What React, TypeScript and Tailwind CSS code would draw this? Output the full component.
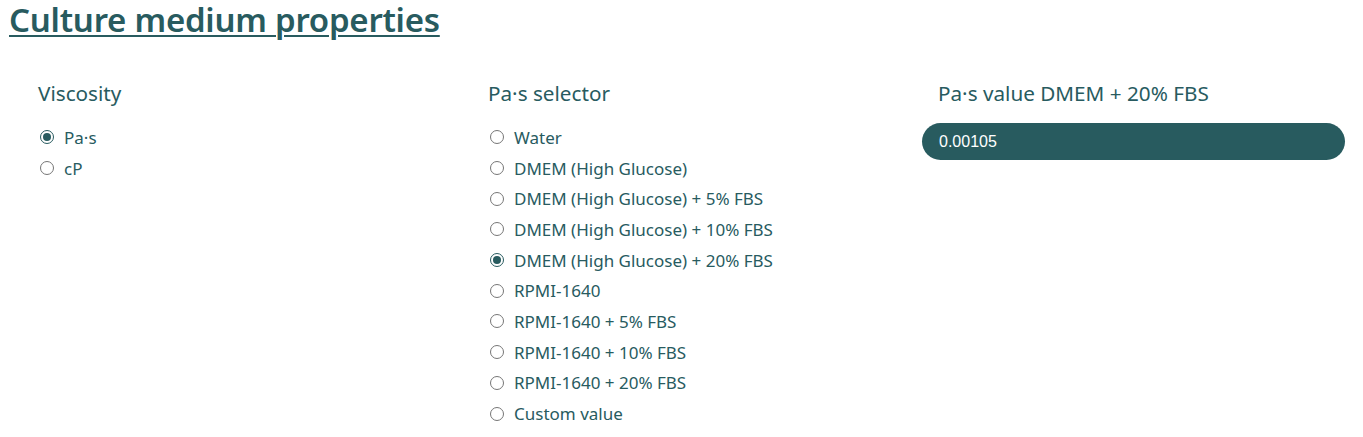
import React, { useState } from "react";

function Radio({ name, label, checked, onChange }: { name: string; label: string; checked: boolean; onChange: () => void }) {
  return (
    <label className="flex items-center h-[30.7px] cursor-pointer">
      <input type="radio" name={name} checked={checked} onChange={onChange} className="sr-only" />
      {checked ? (
        <span className="ml-[2px] w-[14px] h-[14px] rounded-full border-[1.5px] border-[#285b5f] flex items-center justify-center shrink-0">
          <span className="w-[8px] h-[8px] rounded-full bg-[#285b5f]" />
        </span>
      ) : (
        <span className="ml-[2px] w-[14px] h-[14px] rounded-full border border-[#767676] bg-white shrink-0" />
      )}
      <span className="ml-[10px] text-[17px] leading-none">{label}</span>
    </label>
  );
}

export default function App() {
  const [unit, setUnit] = useState("Pa·s");
  const [sel, setSel] = useState("DMEM (High Glucose) + 20% FBS");
  const options = [
    "Water",
    "DMEM (High Glucose)",
    "DMEM (High Glucose) + 5% FBS",
    "DMEM (High Glucose) + 10% FBS",
    "DMEM (High Glucose) + 20% FBS",
    "RPMI-1640",
    "RPMI-1640 + 5% FBS",
    "RPMI-1640 + 10% FBS",
    "RPMI-1640 + 20% FBS",
    "Custom value",
  ];
  return (
    <div className="w-[1363px] h-[437px] bg-white overflow-hidden text-[#285b5f] font-['Noto_Sans',sans-serif]">
      <h1 className="pl-[9px] text-[33px] leading-[40px] font-semibold tracking-[-0.25px] underline decoration-[2px] underline-offset-[3px]">
        Culture medium properties
      </h1>
      <div className="flex mt-[39px]">
        <div className="w-[488px] pl-[38px]">
          <div className="text-[20.7px] leading-[28px] h-[28px]">Viscosity</div>
          <div className="mt-[15px]">
            {["Pa·s", "cP"].map((u) => (
              <Radio key={u} name="unit" label={u} checked={unit === u} onChange={() => setUnit(u)} />
            ))}
          </div>
        </div>
        <div className="w-[434px]">
          <div className="text-[20.7px] leading-[28px] h-[28px]">Pa·s selector</div>
          <div className="mt-[15px]">
            {options.map((o) => (
              <Radio key={o} name="sel" label={o} checked={sel === o} onChange={() => setSel(o)} />
            ))}
          </div>
        </div>
        <div className="w-[423px]">
          <div className="pl-[16px] text-[20.7px] leading-[28px] h-[28px]">Pa·s value DMEM + 20% FBS</div>
          <div className="mt-[16px] h-[37px] rounded-full bg-[#285b5f] flex items-center pl-[17px] text-white text-[16px] font-['Liberation_Sans',sans-serif]">
            0.00105
          </div>
        </div>
      </div>
    </div>
  );
}
